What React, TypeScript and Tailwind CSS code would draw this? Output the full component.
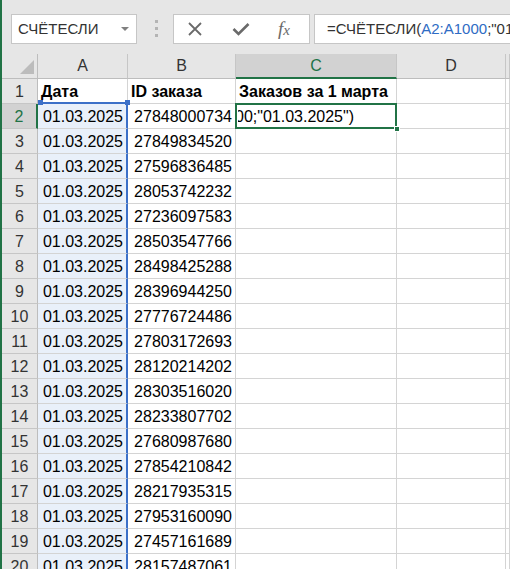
import React from "react";

const ids = [
  "27848000734",
  "27849834520",
  "27596836485",
  "28053742232",
  "27236097583",
  "28503547766",
  "28498425288",
  "28396944250",
  "27776724486",
  "27803172693",
  "28120214202",
  "28303516020",
  "28233807702",
  "27680987680",
  "27854210842",
  "28217935315",
  "27953160090",
  "27457161689",
  "28157487061",
];

const font = { fontFamily: '"Liberation Sans", Arial, sans-serif' };

function ColHead({ label, active }: { label: string; active?: boolean }) {
  return (
    <div
      className={
        "flex h-[25px] items-center justify-center border-r border-[#c6c6c6] text-[16px] " +
        (active
          ? "border-b-2 border-b-[#217346] bg-[#d2d2d2] text-[#217346]"
          : "border-b border-b-[#bdbdbd] bg-[#e6e6e6] text-[#333]")
      }
    >
      {label}
    </div>
  );
}

function RowHead({ n, active }: { n: number; active?: boolean }) {
  return (
    <div
      className={
        "flex h-[25px] items-center justify-center border-b border-[#c6c6c6] pt-[2px] text-[16px] " +
        (active
          ? "border-r-2 border-r-[#217346] bg-[#d2d2d2] text-[#217346]"
          : "border-r border-r-[#bdbdbd] bg-[#e6e6e6] text-[#333]")
      }
    >
      {n}
    </div>
  );
}

function Cell({ children, className = "" }: { children?: React.ReactNode; className?: string }) {
  return (
    <div
      className={
        "relative flex h-[25px] items-center whitespace-nowrap border-b border-r border-[#d4d4d4] pt-[2px] text-[16px] text-black " +
        className
      }
    >
      {children}
    </div>
  );
}

export default function App() {
  return (
    <div className="flex h-[569px] w-[510px] overflow-hidden bg-white" style={font}>
      <div className="w-[2px] shrink-0 bg-[#217346]" />
      <div className="flex min-w-0 flex-1 flex-col">
        {/* formula bar */}
        <div className="flex h-[54px] shrink-0 items-start bg-[#e6e6e6] pt-[14px]">
          <div className="ml-[9px] flex h-[30px] w-[126px] items-center justify-between border border-[#c6c6c6] bg-white pl-[6px] pr-[7px] text-[15px] text-[#333]">
            <span>СЧЁТЕСЛИ</span>
            <span className="h-0 w-0 border-x-[4px] border-t-[4px] border-x-transparent border-t-[#808080]" />
          </div>
          <div className="ml-[18px] mt-[6px] flex flex-col gap-[4px]">
            <span className="h-[3px] w-[3px] bg-[#b4b4b4]" />
            <span className="h-[3px] w-[3px] bg-[#b4b4b4]" />
            <span className="h-[3px] w-[3px] bg-[#b4b4b4]" />
          </div>
          <div className="ml-[15px] flex h-[30px] w-[137px] items-center border border-[#c6c6c6] bg-white">
            <svg width="14" height="14" viewBox="0 0 14 14" className="ml-[14px]">
              <path d="M1 1 L13 13 M13 1 L1 13" stroke="#6a6a6a" strokeWidth="1.8" />
            </svg>
            <svg width="18" height="14" viewBox="0 0 18 14" className="ml-[30px]">
              <path d="M1.5 7 L6.5 12 L16.5 2" stroke="#6a6a6a" strokeWidth="2.6" fill="none" />
            </svg>
            <span
              className="ml-[28px] text-[19px] italic text-[#6a6a6a]"
              style={{ fontFamily: '"Liberation Serif", "Times New Roman", serif' }}
            >
              f<span className="text-[15px]">x</span>
            </span>
          </div>
          <div className="ml-[4px] flex h-[30px] flex-1 items-center overflow-hidden whitespace-nowrap border-y border-l border-[#c6c6c6] bg-white pl-[12px] text-[15px] text-[#333]">
            =СЧЁТЕСЛИ(<span className="text-[#2f6cc4]">A2:A1000</span>;"01.03.2025")
          </div>
        </div>

        {/* sheet */}
        <div className="grid grid-cols-[36px_90px_108px_161px_109px_1fr]">
          <div className="relative h-[25px] border-b border-r border-[#bdbdbd] bg-[#e6e6e6]">
            <span className="absolute bottom-[4px] right-[3px] h-0 w-0 border-b-[14px] border-l-[14px] border-b-[#bcbcbc] border-l-transparent" />
          </div>
          <ColHead label="A" />
          <ColHead label="B" />
          <ColHead label="C" active />
          <ColHead label="D" />
          <ColHead label="" />

          <RowHead n={1} />
          <Cell className="border-b-2 border-b-[#3c70c8] pl-[3px] font-bold">Дата</Cell>
          <Cell className="pl-[3px] font-bold">ID заказа</Cell>
          <Cell className="pl-[3px] font-bold">Заказов за 1 марта</Cell>
          <Cell />
          <Cell />

          {ids.map((id, i) => {
            const n = i + 2;
            return (
              <React.Fragment key={n}>
                <RowHead n={n} active={n === 2} />
                <Cell className="justify-end border-r-2 border-r-[#3c70c8] bg-[#e9f0fa] pr-[3px]">
                  {n === 2 && (
                    <>
                      <span className="absolute left-0 top-[-4px] z-10 h-[5px] w-[5px] bg-[#3c70c8]" />
                      <span className="absolute right-[-4px] top-[-4px] z-10 h-[5px] w-[5px] bg-[#3c70c8]" />
                    </>
                  )}
                  01.03.2025
                </Cell>
                <Cell className="justify-end pr-[3px]">{id}</Cell>
                {n === 2 ? (
                  <Cell className="pl-[2px] pr-[42px]">
                    <span className="absolute inset-[-1px] z-10 border-2 border-[#217346]" />
                    <span className="absolute bottom-[-4px] right-[-4px] z-20 h-[6px] w-[6px] border border-white bg-[#217346]" />
                    <div className="flex min-w-0 flex-1 justify-end overflow-hidden">
                      <span>A1000;"01.03.2025")</span>
                    </div>
                  </Cell>
                ) : (
                  <Cell />
                )}
                <Cell />
                <Cell />
              </React.Fragment>
            );
          })}
        </div>
      </div>
    </div>
  );
}
